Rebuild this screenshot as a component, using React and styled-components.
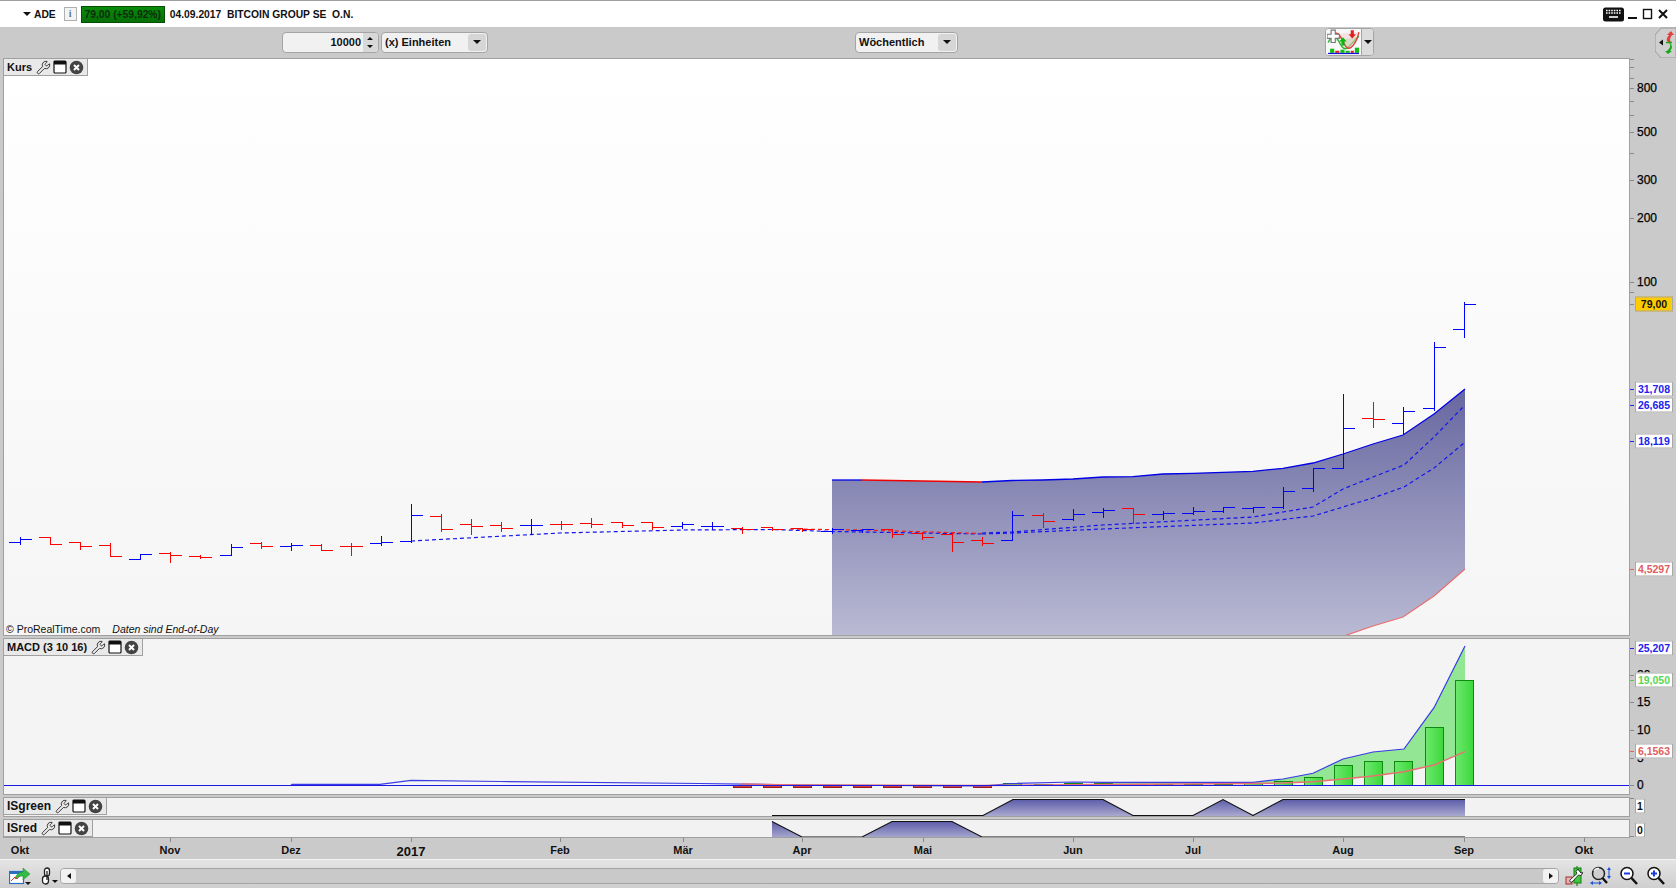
import React from 'react'
import styled, { createGlobalStyle } from 'styled-components'
import { Wrench } from 'lucide-react'

const GlobalStyle = createGlobalStyle`
	html, body { margin: 0; padding: 0; background: #cacaca; overflow: hidden; }
	body { font-family: "Liberation Sans", Arial, sans-serif; font-size: 11px; color: #111; }
`

// [x, open, close, high, low] in page pixels, weekly bars
const BARS = [
	[20,542,539,537,544,'b'],[50,537,544,537,544,'r'],[80,542,546,542,549,'r'],[110,545,556,543,556,'r'],
	[140,559,554,554,559,'b'],[170,553,555,552,562,'r'],[200,556,557,555,558,'r'],[231,555,547,544,555,'b'],
	[261,543,546,542,548,'r'],[291,546,545,543,550,'b'],[321,545,550,544,550,'r'],[351,546,546,543,555,'r'],
	[381,543,542,536,545,'b'],[411,541,515,504,542,'b'],[441,516,529,514,531,'r'],[471,524,526,519,534,'r'],
	[501,525,528,522,531,'r'],[531,525,525,519,534,'b'],[561,524,524,521,529,'r'],[591,523,524,518,527,'r'],
	[622,522,525,522,527,'r'],[652,522,527,522,529,'r'],[682,526,524,522,528,'b'],[712,526,526,522,529,'b'],
	[742,528,529,527,533,'r'],[772,527,529,527,530,'r'],[802,528,529,528,531,'r'],[832,531,529,528,533,'b'],
	[862,530,529,529,532,'b'],[892,529,534,529,537,'r'],[922,533,537,532,539,'r'],[952,534,542,533,551,'r'],
	[982,540,543,537,545,'r'],[1012,540,515,511,540,'b'],[1043,515,521,513,527,'r'],[1073,519,514,509,520,'b'],
	[1103,512,510,508,517,'b'],[1133,508,514,508,523,'r'],[1163,514,513,511,519,'b'],[1193,513,511,507,514,'b'],
	[1223,511,507,507,512,'b'],[1253,508,507,507,512,'b'],[1283,507,491,487,508,'b'],[1313,488,468,468,491,'b'],
	[1343,468,428,394,468,'b'],[1373,418,419,402,427,'r'],[1403,423,411,407,433,'b'],[1434,408,347,342,410,'b'],
	[1464,329,304,302,337,'b']
]

const TOP_LINE = [[982,482],[1012,480.5],[1043,480],[1073,479],[1103,477],[1133,476.6],[1163,474],[1193,473.3],[1223,472.3],[1253,471.3],[1283,468.3],[1313,463],[1343,454],[1373,444],[1403,435],[1434,414],[1465,389]]
const LOW_LINE = [[1465,569],[1434,596],[1403,617],[1373,626],[1344,636]]
const DASH_UP = [[982,533],[1012,532],[1103,525],[1253,517],[1313,507],[1343,489],[1373,477],[1404,465],[1434,437],[1464,406]]
const DASH_LOW = [[982,534],[1012,533],[1103,529],[1253,523],[1313,516],[1343,507],[1373,498],[1404,487],[1434,468],[1464,443]]
const DASH_LEFT = [[411,541],[560,533],[683,530],[772,529.5],[832,531.5],[982,534]]

// histogram: [x, top]
const HIST = [[1012,783],[1043,784],[1073,783],[1103,783],[1133,784],[1163,784],[1193,784],[1223,784],[1253,783],[1283,781],[1313,777],[1343,765],[1373,761],[1403,761],[1434,727],[1464,680]]
const HIST_NEG = [[742,787],[772,787],[802,787],[832,787],[862,787],[892,787],[922,787],[952,787],[982,787]]
const MACD_LINE = [[3,785.5],[291,785.5],[292,784.3],[380,784.3],[411,780.3],[500,781.5],[700,783.5],[800,785],[982,786],[1012,783.5],[1073,782],[1103,782.3],[1253,782.3],[1283,779],[1313,773.3],[1343,759],[1373,752],[1404,749],[1434,707.7],[1465,646]]
const MACD_SIGNAL = [[742,784],[800,785],[982,785.5],[1103,784.5],[1253,783.5],[1283,783],[1313,781.7],[1343,779],[1373,776],[1404,771.7],[1434,765],[1465,751.7]]
const MACD_FILL = [[1100,782.3],[1253,782.3],[1283,779],[1313,773.3],[1343,759],[1373,752],[1404,749],[1434,707.7],[1465,646],[1465,751.7],[1434,765],[1404,771.7],[1373,776],[1343,779],[1313,781.7],[1283,783],[1253,783.5],[1100,784.5]]

const IS_GREEN = [[772,815.5],[983,815.5],[1013,799.5],[1103,799.5],[1133,815.5],[1193,815.5],[1223,799.5],[1253,815.5],[1283,799.5],[1465,799.5]]
const IS_RED = [[772,821.5],[802,837],[862,837],[892,821.5],[952,821.5],[982,837],[1465,837]]

const pts = (list) => list.map((p) => p.join(',')).join(' ')

const MONTHS = [[20,'Okt'],[170,'Nov'],[291,'Dez'],[411,'2017',true],[560,'Feb'],[683,'Mär'],[802,'Apr'],[923,'Mai'],[1073,'Jun'],[1193,'Jul'],[1343,'Aug'],[1464,'Sep'],[1584,'Okt']]

const PRICE_TICKS = [59,67,78,88,101,115,132,153,180,218,282,292,304]

export default function App() {
	return (
		<Page>
			<GlobalStyle />
			<TitleBar>
				<SymbolArrow />
				<Symbol>ADE</Symbol>
				<InfoBox>i</InfoBox>
				<PriceTag>79,00 (+59,92%)</PriceTag>
				<Symbol>04.09.2017&nbsp; BITCOIN GROUP SE&nbsp; O.N.</Symbol>
				<WindowControls>
					<KeyboardIcon />
					<svg width="46" height="14" viewBox="0 0 46 14">
						<rect x="0" y="10" width="9" height="2" fill="#111" />
						<rect x="15.5" y="2.5" width="8" height="9" fill="none" stroke="#111" strokeWidth="1.4" />
						<path d="M31 3l8 8M39 3l-8 8" stroke="#111" strokeWidth="2" />
					</svg>
				</WindowControls>
			</TitleBar>

			<Toolbar>
				<Spinner>
					<SpinnerValue>10000</SpinnerValue>
					<SpinnerArrows>
						<svg width="14" height="19" viewBox="0 0 14 19">
							<path d="M4 7l3-3 3 3zM4 12l3 3 3-3z" fill="#111" />
						</svg>
					</SpinnerArrows>
				</Spinner>
				<Select $width={107}>
					<span>(x) Einheiten</span>
					<SelectButton><Triangle /></SelectButton>
				</Select>
				<Select $width={103} $left={367}>
					<span>Wöchentlich</span>
					<SelectButton><Triangle /></SelectButton>
				</Select>
				<ChartButton>
					<ChartAddIcon />
					<ChartButtonArrow><Triangle /></ChartButtonArrow>
				</ChartButton>
				<SideTab><SideIcon /></SideTab>
			</Toolbar>

			<PanelRow $height={578}>
				<Chart $bg="linear-gradient(#ffffff, #f5f5f5)">
					<Drawing viewBox="4 59 1625 576" preserveAspectRatio="none">
						<defs>
							<linearGradient id="area" gradientUnits="userSpaceOnUse" x1="0" y1="389" x2="0" y2="636">
								<stop offset="0" stopColor="#6767a0" />
								<stop offset="1" stopColor="#babad4" />
							</linearGradient>
						</defs>
						<polygon fill="url(#area)" points={pts([[832,480],[862,480],[922,481], ...TOP_LINE, ...LOW_LINE, [832,636]])} />
						<polyline fill="none" stroke="#0000e6" strokeWidth="1.3" points={pts([[832,480],[862,480]])} />
						<polyline fill="none" stroke="#f00000" strokeWidth="1.3" points={pts([[862,480],[922,481],[982,482]])} />
						<polyline fill="none" stroke="#0000e6" strokeWidth="1.3" points={pts(TOP_LINE)} />
						<polyline fill="none" stroke="#e87070" strokeWidth="1.2" points={pts(LOW_LINE)} />
						<polyline fill="none" stroke="#1414ee" strokeWidth="1.2" strokeDasharray="4 3" points={pts(DASH_LEFT)} />
						<polyline fill="none" stroke="#ee2020" strokeWidth="1.2" strokeDasharray="4 3" points={pts([[790,529],[862,530],[982,533.5]])} />
						<polyline fill="none" stroke="#1414ee" strokeWidth="1.2" strokeDasharray="4 3" points={pts(DASH_UP)} />
						<polyline fill="none" stroke="#1414ee" strokeWidth="1.2" strokeDasharray="4 3" points={pts(DASH_LOW)} />
						<g shapeRendering="crispEdges">
							{BARS.map(([x, o, c, h, l, col]) => (
								<path key={x} fill="none" stroke={col === 'b' ? '#0000ff' : '#ff0000'} strokeWidth="1"
									d={`M${x + 0.5} ${h}V${l + 1}M${x - 11} ${o + 0.5}H${x + 1}M${x} ${c + 0.5}H${x + 12}`} />
							))}
						</g>
					</Drawing>
					<Legend>Kurs<LegendIcons /></Legend>
					<Copyright>© ProRealTime.com<CopyrightNote>Daten sind End-of-Day</CopyrightNote></Copyright>
				</Chart>
				<Axis>
					{PRICE_TICKS.map((y) => <Tick key={y} $y={y - 58} />)}
					{[[88,'800'],[132,'500'],[180,'300'],[218,'200'],[282,'100']].map(([y, t]) => (
						<AxisText key={t} $y={y - 58}>{t}</AxisText>
					))}
					<ValueBox $y={304 - 58} $color="#111" $bg="#ffcc00">79,00</ValueBox>
					<ValueBox $y={389 - 58} $color="#2222ee">31,708</ValueBox>
					<ValueBox $y={405 - 58} $color="#2222ee">26,685</ValueBox>
					<ValueBox $y={441 - 58} $color="#2222ee">18,119</ValueBox>
					<ValueBox $y={569 - 58} $color="#e06060">4,5297</ValueBox>
					<Tick $y={389 - 58} $color="#2222ee" />
					<Tick $y={405 - 58} $color="#2222ee" />
					<Tick $y={441 - 58} $color="#2222ee" />
					<Tick $y={569 - 58} $color="#e06060" />
				</Axis>
			</PanelRow>

			<PanelRow $height={157} $gap>
				<Chart $bg="#f4f4f4">
					<Drawing viewBox="4 639 1625 155" preserveAspectRatio="none">
						<defs>
							<linearGradient id="hist" x1="0" y1="0" x2="1" y2="0">
								<stop offset="0" stopColor="#6fe96f" />
								<stop offset="1" stopColor="#3dd83d" />
							</linearGradient>
						</defs>
						<polygon fill="#93e693" points={pts(MACD_FILL)} />
						<g shapeRendering="crispEdges">
							{HIST.map(([x, y]) => (
								<rect key={x} x={x - 9} y={y + 0.5} width="18" height={785 - y} fill="url(#hist)" stroke="#0e8a0e" />
							))}
							{HIST_NEG.map(([x, y]) => (
								<rect key={x} x={x - 9} y="785.5" width="18" height={y - 785} fill="#d04040" stroke="#a01818" />
							))}
						</g>
						<polyline fill="none" stroke="#3a3ae6" strokeWidth="1.2" points={pts(MACD_LINE)} />
						<polyline fill="none" stroke="#e87070" strokeWidth="1.4" points={pts(MACD_SIGNAL)} />
						<line x1="4" x2="1630" y1="785.5" y2="785.5" stroke="#1a1ae0" strokeWidth="1" shapeRendering="crispEdges" />
					</Drawing>
					<Legend>MACD (3 10 16)<LegendIcons /></Legend>
				</Chart>
				<Axis>
					{[[675,'20'],[702,'15'],[730,'10'],[758,'5'],[785,'0']].map(([y, t]) => (
						<React.Fragment key={t}>
							<Tick $y={y - 638} />
							<AxisText $y={y - 638}>{t}</AxisText>
						</React.Fragment>
					))}
					<Tick $y={648 - 638} $color="#2222ee" />
					<Tick $y={680 - 638} $color="#50d050" />
					<Tick $y={751 - 638} $color="#e06060" />
					<ValueBox $y={648 - 638} $color="#2222ee">25,207</ValueBox>
					<ValueBox $y={680 - 638} $color="#55d855">19,050</ValueBox>
					<ValueBox $y={751 - 638} $color="#e06060">6,1563</ValueBox>
				</Axis>
			</PanelRow>

			<PanelRow $height={20} $gap>
				<Chart $bg="#f2f2f2">
					<Drawing viewBox="4 798 1625 18" preserveAspectRatio="none">
						<defs>
							<linearGradient id="isg" gradientUnits="userSpaceOnUse" x1="0" y1="799" x2="0" y2="816">
								<stop offset="0" stopColor="#5a5aa8" />
								<stop offset="1" stopColor="#a9a9cf" />
							</linearGradient>
						</defs>
						<polygon fill="url(#isg)" points={pts([...IS_GREEN, [1465,816],[772,816]])} />
						<polyline fill="none" stroke="#111" strokeWidth="1.1" points={pts(IS_GREEN)} />
					</Drawing>
					<Legend $large>ISgreen<LegendIcons /></Legend>
				</Chart>
				<Axis>
					<Tick $y={1} />
					<ValueBox $y={8.5} $color="#111" $narrow>1</ValueBox>
				</Axis>
			</PanelRow>

			<PanelRow $height={19} $gap>
				<Chart $bg="#f2f2f2">
					<Drawing viewBox="4 820 1625 17" preserveAspectRatio="none">
						<defs>
							<linearGradient id="isr" gradientUnits="userSpaceOnUse" x1="0" y1="821" x2="0" y2="838">
								<stop offset="0" stopColor="#5a5aa8" />
								<stop offset="1" stopColor="#a9a9cf" />
							</linearGradient>
						</defs>
						<polygon fill="url(#isr)" points={pts([...IS_RED, [772,837]])} />
						<polyline fill="none" stroke="#111" strokeWidth="1.1" points={pts(IS_RED)} />
					</Drawing>
					<Legend $large>ISred<LegendIcons /></Legend>
				</Chart>
				<Axis>
					<Tick $y={17} />
					<ValueBox $y={11} $color="#111" $narrow>0</ValueBox>
				</Axis>
			</PanelRow>

			<TimeAxis>
				{MONTHS.map(([x, label, big]) => (
					<MonthMark key={x} $x={x}>
						<MonthLabel $big={big}>{label}</MonthLabel>
					</MonthMark>
				))}
			</TimeAxis>

			<Footer>
				<PublishIcon />
				<LinkIcon />
				<ScrollTrack>
					<ScrollButton><Caret $dir="left" /></ScrollButton>
					<ScrollButton><Caret $dir="right" /></ScrollButton>
				</ScrollTrack>
				<ZoomTools>
					<CandleWrenchIcon />
					<FitZoomIcon />
					<LensIcon sign="minus" />
					<LensIcon sign="plus" />
				</ZoomTools>
			</Footer>
		</Page>
	)
}

const LegendIcons = () => (
	<LegendTools>
		<Wrench size={15} strokeWidth={1.3} color="#111" />
		<svg width="14" height="14" viewBox="0 0 14 14">
			<rect x="1" y="1" width="12" height="12" rx="1" fill="#fff" stroke="#111" strokeWidth="1.2" />
			<rect x="1" y="1" width="12" height="3.5" fill="#111" />
		</svg>
		<svg width="15" height="15" viewBox="0 0 15 15">
			<circle cx="7.5" cy="7.5" r="6.8" fill="#444" />
			<path d="M5 5l5 5M10 5l-5 5" stroke="#fff" strokeWidth="2" />
		</svg>
	</LegendTools>
)

const KeyboardIcon = () => (
	<svg width="21" height="15" viewBox="0 0 21 15">
		<rect width="21" height="14" y="0.5" rx="2.5" fill="#111" />
		<path d="M3 3.5h15M3 6h15" stroke="#fff" strokeWidth="1.3" strokeDasharray="1.6 1" />
		<path d="M6 10h9" stroke="#fff" strokeWidth="1.6" />
	</svg>
)

const ChartAddIcon = () => (
	<ChartIconBox>
		<svg width="33" height="26" viewBox="0 0 32 25">
			<path d="M1 13c4-8 7-8 10-2s5 10 9 7 7-8 11-11" fill="#bfe9bf" stroke="#2fb02f" strokeWidth="1.3" />
			<path d="M6 5c4-3 6 0 9 6s5 9 8 7 6-6 8-15" fill="#f6cccc" fillOpacity="0.5" stroke="#e03c3c" strokeWidth="1.3" />
			<path d="M4 1h4v4h4v4H8v4H4V9H0V5h4z" fill="#fff" stroke="#777" strokeWidth="1.1" />
			<path d="M14 16V12h-2l3.5-4 3.5 4h-2v4z" fill="#0fb50f" />
			<path d="M23 1v4h-2l3.5 4 3.5-4h-2V1z" fill="#e02020" />
			<rect x="3" y="19" width="4" height="4" fill="#0ec00e" />
			<rect x="8" y="21" width="4" height="2" fill="#e02020" />
			<rect x="13" y="20" width="4" height="3" fill="#0ec00e" />
			<rect x="18" y="21" width="4" height="2" fill="#0ec00e" />
			<rect x="23" y="21" width="3" height="2" fill="#e02020" />
			<rect x="27" y="18" width="4" height="5" fill="#0ec00e" />
			<rect x="1" y="23" width="30" height="1.2" fill="#1414dd" />
		</svg>
	</ChartIconBox>
)

const SideIcon = () => (
	<svg width="21" height="31" viewBox="0 0 21 31">
		<path d="M0 8L6 1h15v30H6L0 24z" fill="#cfcfcf" stroke="#9a9a9a" />
		<path d="M4 15.5l4-3v6z" fill="#111" />
		<path d="M13 15c-3-3 0-5 1-7h-2l4-4 3 4h-2c-1 2-3 4-1 7z" fill="#e04040" />
		<path d="M14 16c3 3 0 6-2 8h-2l3 3 4-3h-2c2-2 3-5 0-8z" fill="#16a816" />
		<path d="M11 15.5h6" stroke="#16a816" strokeWidth="1.5" />
	</svg>
)

const PublishIcon = () => (
	<FooterIcon $left={9}>
		<svg width="22" height="18" viewBox="0 0 22 18">
			<rect x="0.5" y="4.5" width="14" height="12" fill="#fff" stroke="#2a6fc0" strokeWidth="1.2" />
			<rect x="0.5" y="4.5" width="14" height="2.5" fill="#2a6fc0" />
			<path d="M2 14l4-4 2 2 4-5" fill="none" stroke="#d83030" strokeWidth="1" />
			<path d="M6 12c1-5 5-7 8-7V1l7 6-7 6V9c-3 0-6 1-8 3z" fill="#33bb44" stroke="#1d8a2a" strokeWidth="0.5" />
			<path d="M16 15h6l-3 3z" fill="#111" />
		</svg>
	</FooterIcon>
)

const LinkIcon = () => (
	<FooterIcon $left={10}>
		<svg width="18" height="18" viewBox="0 0 18 18">
			<rect x="3.5" y="1" width="5" height="8" rx="2.5" fill="#fff" stroke="#222" strokeWidth="1.3" />
			<rect x="1.5" y="9" width="6" height="8" rx="3" fill="#fff" stroke="#222" strokeWidth="1.3" />
			<path d="M6 4v9" stroke="#222" strokeWidth="1.3" />
			<path d="M11 13h6l-3 3z" fill="#111" />
		</svg>
	</FooterIcon>
)

const CandleWrenchIcon = () => (
	<svg width="18" height="20" viewBox="0 0 18 20">
		<path d="M12 0v20" stroke="#116611" />
		<rect x="9" y="2" width="7" height="15" fill="#3fc83f" stroke="#0f7d0f" />
		<rect x="1" y="11" width="6" height="7" fill="#e8b0b0" stroke="#a03030" />
		<path d="M13 3l-2 2.5 1 2-7 6.5c-1 1 .5 3 2 2l6.500-7 2.500.5 2-3-2 .5-1.500-1.500z" fill="#fff" stroke="#222" strokeWidth="0.9" />
	</svg>
)

const FitZoomIcon = () => (
	<svg width="22" height="20" viewBox="0 0 22 20">
		<circle cx="8.500" cy="7.500" r="6" fill="#cfcfcf" stroke="#222" strokeWidth="1.500" />
		<path d="M4 5c1-2 3-3 5-2.500" stroke="#fff" strokeWidth="1.400" fill="none" />
		<path d="M12.500 12l4.500 5" stroke="#111" strokeWidth="2.400" />
		<path d="M19 1l2 3h-1.500v6H21l-2 3-2-3h1.500V4H17zM0 17l3-2v1.500h6V15l3 2-3 2v-1.500H3V19z" fill="#1a4fd8" />
	</svg>
)

const LensIcon = ({ sign }) => (
	<svg width="20" height="20" viewBox="0 0 20 20">
		<circle cx="8" cy="7.500" r="6" fill="#fff" stroke="#111" strokeWidth="1.500" />
		<path d="M12.500 12l5.500 6" stroke="#111" strokeWidth="2.500" />
		<path d={sign === 'plus' ? 'M5 7.500h6M8 4.500v6' : 'M5 7.500h6'} stroke="#1a3fd8" strokeWidth="2" />
	</svg>
)

const Page = styled.div`
	width: 1676px;
	height: 888px;
	display: flex;
	flex-direction: column;
	background: #cacaca;
	overflow: hidden;
`

const TitleBar = styled.div`
	height: 26px;
	box-sizing: content-box;
	border-top: 1px solid #a0a0a0;
	background: #fff;
	display: flex;
	align-items: center;
	padding-left: 23px;
`

const SymbolArrow = styled.span`
	width: 0;
	height: 0;
	border-left: 4px solid transparent;
	border-right: 4px solid transparent;
	border-top: 4px solid #111;
	margin-right: 3px;
`

const Symbol = styled.span`
	font-weight: 700;
	font-size: 10.3px;
	color: #111;
	white-space: nowrap;
`

const InfoBox = styled.span`
	width: 11px;
	height: 12px;
	margin: 0 4px 0 8px;
	border: 1px solid #b0b0b0;
	background: #f4f4f4;
	color: #5a7a9a;
	font: 700 10px "Liberation Serif", serif;
	text-align: center;
	line-height: 12px;
`

const PriceTag = styled.span`
	width: 82px;
	height: 15px;
	margin-right: 5px;
	background: linear-gradient(#0a8a0a, #067006);
	border: 1px solid #054f05;
	color: #0c2c0c;
	font-weight: 700;
	font-size: 10.3px;
	line-height: 15px;
	text-align: center;
	white-space: nowrap;
`

const WindowControls = styled.div`
	margin-left: auto;
	margin-right: 2px;
	display: flex;
	align-items: center;
	gap: 4px;
`

const Toolbar = styled.div`
	height: 31px;
	box-sizing: border-box;
	display: flex;
	align-items: center;
	padding: 0 0 1px 282px;
	background: #cacaca;
`

const Spinner = styled.div`
	width: 97px;
	height: 21px;
	margin-right: 2px;
	display: flex;
	align-items: center;
	justify-content: flex-end;
	box-sizing: border-box;
	border: 1px solid #a4a4a4;
	border-radius: 4px;
	background: #f1f1f1;
	font-weight: 700;
	font-size: 11px;
`

const SpinnerValue = styled.span`
	margin-right: 2px;
`

const SpinnerArrows = styled.span`
	width: 15px;
	height: 19px;
	background: #d8d8d8;
	border-radius: 0 3px 3px 0;
`

const Select = styled.div`
	width: ${(p) => p.$width}px;
	height: 21px;
	margin-left: ${(p) => p.$left || 0}px;
	display: flex;
	align-items: center;
	justify-content: space-between;
	box-sizing: border-box;
	padding: 0 1px 0 3px;
	border: 1px solid #a4a4a4;
	border-radius: 4px;
	background: #f1f1f1;
	font-weight: 700;
	font-size: 11px;
	white-space: nowrap;
`

const Triangle = styled.span`
	width: 0;
	height: 0;
	border-left: 4px solid transparent;
	border-right: 4px solid transparent;
	border-top: 4px solid #111;
`

const SelectButton = styled.span`
	width: 18px;
	height: 17px;
	display: flex;
	align-items: center;
	justify-content: center;
	background: #d6d6d6;
	border-radius: 3px;
`

const ChartButton = styled.div`
	width: 49px;
	height: 28px;
	margin-left: 367px;
	display: flex;
	box-sizing: border-box;
	border: 1px solid #a4a4a4;
	border-radius: 4px;
	background: #efefef;
`

const ChartIconBox = styled.div`
	width: 35px;
	border-right: 1px solid #a4a4a4;
	display: flex;
	align-items: center;
	justify-content: center;
	background: #f8f8f8;
	border-radius: 3px 0 0 3px;
`

const ChartButtonArrow = styled.div`
	flex: 1;
	display: flex;
	align-items: center;
	justify-content: center;
	background: #dcdcdc;
	border-radius: 0 3px 3px 0;
`

const SideTab = styled.div`
	margin-left: auto;
	display: flex;
`

const PanelRow = styled.div`
	height: ${(p) => p.$height}px;
	flex: none;
	display: flex;
	margin-top: ${(p) => (p.$gap ? 2 : 0)}px;
	padding-left: 3px;
`

const Chart = styled.div`
	flex: 1;
	position: relative;
	box-sizing: border-box;
	border: 1px solid #a0a0a0;
	background: ${(p) => p.$bg};
	overflow: hidden;
`

const Drawing = styled.svg`
	display: block;
	width: 100%;
	height: 100%;
`

const Legend = styled.div`
	position: absolute;
	left: 0;
	top: 0;
	height: 16px;
	display: flex;
	align-items: center;
	padding: 0 3px 0 3px;
	background: #e9e9e9;
	border-right: 1px solid #a0a0a0;
	border-bottom: 1px solid #a0a0a0;
	font-weight: 700;
	font-size: ${(p) => (p.$large ? 12 : 11)}px;
	white-space: nowrap;
`

const LegendTools = styled.span`
	display: inline-flex;
	align-items: center;
	gap: 2px;
	margin-left: 4px;
`

const Copyright = styled.div`
	position: absolute;
	left: 2px;
	bottom: 0;
	font-size: 10.5px;
	color: #111;
	white-space: nowrap;
`

const CopyrightNote = styled.em`
	margin-left: 12px;
	font-size: 10.5px;
`

const Axis = styled.div`
	width: 46px;
	flex: none;
	position: relative;
`

const Tick = styled.i`
	position: absolute;
	left: 0;
	top: ${(p) => p.$y}px;
	width: 4px;
	height: 1px;
	background: ${(p) => p.$color || '#888'};
`

const AxisText = styled.span`
	position: absolute;
	left: 7px;
	top: ${(p) => p.$y}px;
	transform: translateY(-50%);
	font-size: 12px;
	color: #000;
	-webkit-text-stroke: 0.25px #000;
	line-height: 12px;
`

const ValueBox = styled.span`
	position: absolute;
	left: 5px;
	top: ${(p) => p.$y}px;
	transform: translateY(-50%);
	width: ${(p) => (p.$narrow ? 8 : 36)}px;
	height: 13px;
	border: 1px solid #a8a8a8;
	background: ${(p) => p.$bg || '#fff'};
	color: ${(p) => p.$color};
	font-weight: 700;
	font-size: 10.5px;
	line-height: 13px;
	text-align: center;
`

const TimeAxis = styled.div`
	height: 21px;
	flex: none;
	position: relative;
`

const MonthMark = styled.div`
	position: absolute;
	left: ${(p) => p.$x}px;
	top: 0;
	height: 4px;
	width: 1px;
	background: #888;
`

const MonthLabel = styled.span`
	position: absolute;
	left: 0;
	top: 6px;
	transform: translateX(-50%);
	font-weight: 700;
	font-size: ${(p) => (p.$big ? 13 : 11)}px;
	color: #111;
	white-space: nowrap;
`

const Footer = styled.div`
	flex: 1;
	display: flex;
	align-items: center;
	border-top: 1px solid #f2f2f2;
	background: linear-gradient(#e4e4e4, #cfcfcf);
	padding-top: 3px;
`

const FooterIcon = styled.span`
	display: flex;
	margin-left: ${(p) => p.$left}px;
`

const ScrollTrack = styled.div`
	width: 1499px;
	height: 16px;
	margin-left: 1px;
	display: flex;
	justify-content: space-between;
	box-sizing: border-box;
	border: 1px solid #a4a4a4;
	border-radius: 4px;
	background: #c9c9c9;
`

const ScrollButton = styled.span`
	width: 15px;
	display: flex;
	align-items: center;
	justify-content: center;
	background: #f2f2f2;
	border-radius: 3px;
`

const Caret = styled.span`
	width: 0;
	height: 0;
	border-top: 3.5px solid transparent;
	border-bottom: 3.5px solid transparent;
	${(p) => (p.$dir === 'left' ? 'border-right: 4px solid #111;' : 'border-left: 4px solid #111;')}
`

const ZoomTools = styled.div`
	display: flex;
	align-items: center;
	gap: 7px;
	margin-left: 6px;
`
